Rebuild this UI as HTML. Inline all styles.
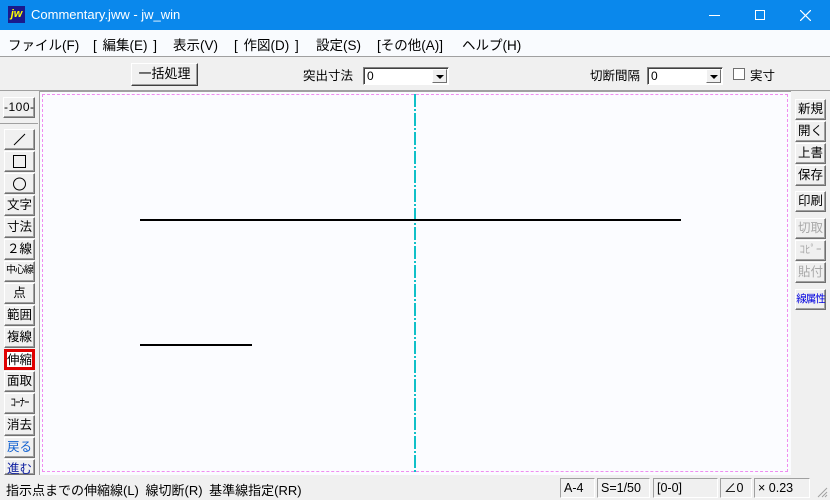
<!DOCTYPE html>
<html><head><meta charset="utf-8"><style>
*{margin:0;padding:0;box-sizing:border-box}
body{width:830px;height:500px;overflow:hidden;background:#f0f0f0;font-family:"Liberation Sans","Noto Sans CJK JP",sans-serif;position:relative}
.a{position:absolute}
.title{left:0;top:0;width:830px;height:30px;background:#0a88ec;color:#fff;font-size:13px}
.menu{left:0;top:30px;width:830px;height:27px;background:#f9fbfe;border-bottom:1px solid #a0a0a0;font-size:13.5px;color:#000}
.menu span{position:absolute;top:4px}
.btn{position:absolute;background:#f0f0f0;border:1px solid;border-color:#fff #707070 #707070 #fff;box-shadow:inset -1px -1px 0 #a0a0a0;font-size:12.5px;text-align:center;line-height:18px;color:#000;white-space:nowrap;overflow:hidden}
.lb{left:4px;width:31px;height:21px}
.rb{left:795px;width:31px;height:21px}
.dis{color:#a8a8a8}
.combo{position:absolute;height:18px;background:#fff;border:1px solid;border-color:#808080 #fff #fff #808080;box-shadow:inset 1px 1px 0 #404040;font-size:12px;line-height:16px;padding-left:3px}
.combo i{position:absolute;right:1px;top:1px;width:15px;height:14px;background:#f0f0f0;border:1px solid;border-color:#fff #707070 #707070 #fff}
.combo i:after{content:"";position:absolute;left:3px;top:5px;border-left:4px solid transparent;border-right:4px solid transparent;border-top:4px solid #000}
.st{position:absolute;top:478px;height:20px;border:1px solid;border-color:#a0a0a0 #fff #fff #a0a0a0;font-size:12.5px;line-height:18px;padding-left:3px}
</style></head><body>
<div class="a title">
  <div class="a" style="left:8px;top:6px;width:17px;height:17px;background:#1a1a8c;color:#ff0;font-weight:bold;font-style:italic;font-size:11px;line-height:16px;text-align:center">jw</div>
  <div class="a" style="left:31px;top:7px;font-size:13px">Commentary.jww - jw_win</div>
  <div class="a" style="left:709px;top:15px;width:11px;height:1px;background:#fff"></div>
  <div class="a" style="left:755px;top:10px;width:10px;height:10px;border:1px solid #fff"></div>
  <svg class="a" style="left:800px;top:10px" width="11" height="11"><path d="M0 0L11 11M11 0L0 11" stroke="#fff" stroke-width="1.2"/></svg>
</div>
<div class="a menu">
  <span style="left:8px">ファイル(F)</span>
  <span style="left:93px;word-spacing:2px">[ 編集(E) ]</span>
  <span style="left:173px">表示(V)</span>
  <span style="left:234px;word-spacing:2px">[ 作図(D) ]</span>
  <span style="left:316px">設定(S)</span>
  <span style="left:377px">[その他(A)]</span>
  <span style="left:462px">ヘルプ(H)</span>
</div>
<!-- toolbar -->
<div class="btn" style="left:131px;top:63px;width:67px;height:23px;line-height:20px;font-size:13px;border-color:#fff #404040 #404040 #fff">一括処理</div>
<div class="a" style="left:303px;top:65px;font-size:12.5px">突出寸法</div>
<div class="combo" style="left:363px;top:67px;width:86px">0<i></i></div>
<div class="a" style="left:590px;top:65px;font-size:12.5px">切断間隔</div>
<div class="combo" style="left:647px;top:67px;width:76px">0<i></i></div>
<div class="a" style="left:733px;top:68px;width:12px;height:12px;background:#fff;border:1px solid #707070"></div>
<div class="a" style="left:750px;top:65px;font-size:12.5px">実寸</div>
<!-- canvas -->
<div class="a" style="left:0;top:90px;width:830px;height:1px;background:#a0a0a0"></div>
<div class="a" style="left:39px;top:91px;width:752px;height:384px;background:#fbfcff;border-left:1px solid #a0a0a0;border-top:1px solid #a0a0a0"></div>
<div class="a" style="left:42px;top:94px;width:746px;height:378px;border:1px dashed #f08cf0"></div>
<svg class="a" style="left:40px;top:92px" width="750" height="382">
  <line x1="375" y1="2" x2="375" y2="382" stroke="#10c0c8" stroke-width="2" stroke-dasharray="13 2 2 2"/>
  <line x1="100" y1="128" x2="641" y2="128" stroke="#000" stroke-width="2"/>
  <line x1="100" y1="253" x2="212" y2="253" stroke="#000" stroke-width="2"/>
</svg>
<!-- left panel -->
<div class="btn" style="left:3px;top:97px;width:32px;height:21px;font-size:12px;letter-spacing:0.5px">-100-</div>
<div class="a" style="left:0;top:123px;width:38px;height:1px;background:#a0a0a0"></div>
<div class="btn lb" style="top:129px"><svg width="29" height="19"><line x1="9" y1="15" x2="20" y2="4" stroke="#000"/></svg></div>
<div class="btn lb" style="top:151px"><svg width="29" height="19"><rect x="8.5" y="3.5" width="12" height="12" fill="none" stroke="#000"/></svg></div>
<div class="btn lb" style="top:173px"><svg width="29" height="19"><circle cx="14.5" cy="10" r="6" fill="none" stroke="#000"/></svg></div>
<div class="btn lb" style="top:195px">文字</div>
<div class="btn lb" style="top:217px">寸法</div>
<div class="btn lb" style="top:239px">２線</div>
<div class="btn lb" style="top:261px;font-size:10px;letter-spacing:-1px">中心線</div>
<div class="btn lb" style="top:283px">点</div>
<div class="btn lb" style="top:305px">範囲</div>
<div class="btn lb" style="top:327px">複線</div>
<div class="btn lb" style="top:349px;border:3px solid #e00000;box-shadow:none;line-height:16px;background:#fff">伸縮</div>
<div class="btn lb" style="top:371px">面取</div>
<div class="btn lb" style="top:393px;font-size:11px;letter-spacing:-1px">ｺｰﾅｰ</div>
<div class="btn lb" style="top:415px">消去</div>
<div class="btn lb" style="top:437px;color:#1060d0">戻る</div>
<div class="btn lb" style="top:459px;height:16px;color:#1020a0">進む</div>
<!-- right panel -->
<div class="btn rb" style="top:99px">新規</div>
<div class="btn rb" style="top:121px">開く</div>
<div class="btn rb" style="top:143px">上書</div>
<div class="btn rb" style="top:165px">保存</div>
<div class="btn rb" style="top:191px">印刷</div>
<div class="btn rb dis" style="top:218px">切取</div>
<div class="btn rb dis" style="top:240px;font-size:11px">ｺﾋﾟｰ</div>
<div class="btn rb dis" style="top:262px">貼付</div>
<div class="btn rb" style="top:289px;color:#0000e0;font-size:10.5px;letter-spacing:-1px">線属性</div>
<!-- status -->
<div class="a" style="left:0;top:475px;width:830px;height:25px;background:#f0f0f0"></div>
<div class="a" style="left:6px;top:480px;font-size:13px;word-spacing:3px">指示点までの伸縮線(L) 線切断(R) 基準線指定(RR)</div>
<div class="st" style="left:560px;width:35px">A-4</div>
<div class="st" style="left:597px;width:53px">S=1/50</div>
<div class="st" style="left:653px;width:65px">[0-0]</div>
<div class="st" style="left:720px;width:32px">∠0</div>
<div class="st" style="left:754px;width:56px">× 0.23</div>
<svg class="a" style="left:815px;top:485px" width="13" height="13"><path d="M12 3L3 12M12 7L7 12M12 10L10 12" stroke="#a0a0a0"/></svg>
</body></html>
